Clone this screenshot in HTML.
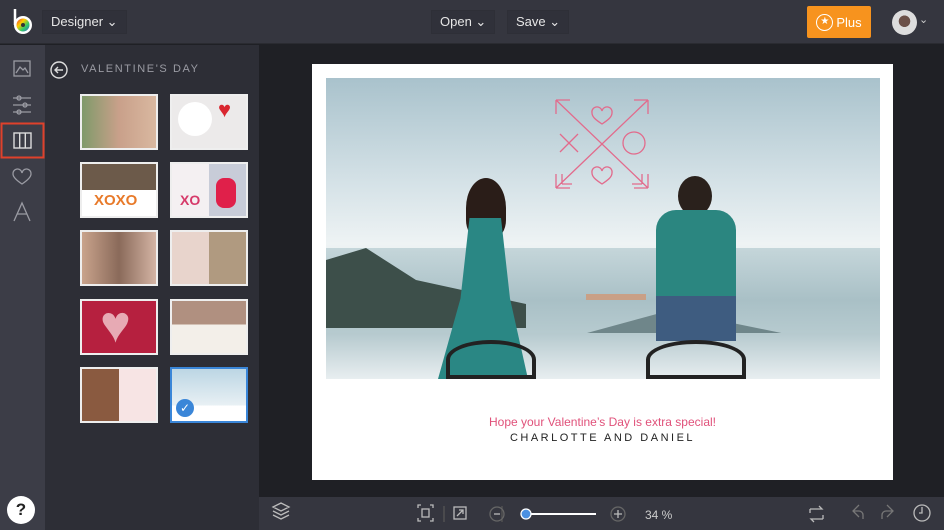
<!DOCTYPE html>
<html><head><meta charset="utf-8"><style>
*{margin:0;padding:0;box-sizing:border-box}
body{width:944px;height:530px;overflow:hidden;background:#1f2025;font-family:"Liberation Sans",sans-serif;position:relative}
.abs{position:absolute}
.top{left:0;top:0;width:944px;height:44px;background:#35363f;border-bottom:1px solid #2a2b31}
.btn{position:absolute;top:10px;height:24px;background:#30313a;border:1px solid #2e2f37;color:#e6e6e6;font-size:13px;line-height:22px;padding:0 8px}
.side{left:0;top:45px;width:45px;height:485px;background:#3c3d47}
.panel{left:45px;top:45px;width:214px;height:485px;background:#2d2e36}
.th{position:absolute;width:78px;height:56px;border:2px solid #eee;overflow:hidden}
.bot{left:259px;top:497px;width:685px;height:33px;background:#35363f}
.ic{stroke:#9a9ba3;fill:none;stroke-width:1.3}
</style></head><body>
<div class="abs top"></div>
<svg class="abs" style="left:10px;top:8px" width="26" height="28" viewBox="0 0 26 28"><path d="M5 1v16" stroke="#fff" stroke-width="2.5"/><circle cx="13" cy="17" r="9" fill="#fff"/><circle cx="13" cy="17" r="6.5" fill="url(#g)"/><defs><linearGradient id="g" x1="0" y1="0" x2="1" y2="1"><stop offset="0" stop-color="#e33"/><stop offset=".35" stop-color="#fc0"/><stop offset=".65" stop-color="#3c6"/><stop offset="1" stop-color="#36c"/></linearGradient></defs><circle cx="13" cy="17" r="2" fill="#333"/></svg>
<div class="btn" style="left:42px">Designer ⌄</div>
<div class="btn" style="left:431px">Open ⌄</div>
<div class="btn" style="left:507px">Save ⌄</div>
<div class="abs" style="left:807px;top:6px;width:64px;height:32px;background:#f7931e;border-radius:2px;color:#fff;font-size:13px;display:flex;align-items:center;justify-content:center;gap:3px;white-space:nowrap"><span style="display:inline-block;width:17px;height:17px;border:1.5px solid #fff;border-radius:50%;font-size:10px;line-height:14px;text-align:center">★</span>Plus</div>
<div class="abs" style="left:892px;top:10px;width:25px;height:25px;border-radius:50%;background:radial-gradient(circle at 50% 45%,#6b5048 30%,#ddd 32%)"></div>
<div class="abs" style="left:919px;top:13px;color:#ccc;font-size:11px">⌄</div>

<div class="abs side"></div>
<svg class="abs" style="left:0;top:45px" width="45" height="200">
<rect x="14" y="16" width="16" height="15" class="ic"/><path d="M16 28l4-6 3 3 2-2 3 5" class="ic"/>
<path d="M13 53h18M13 60h18M13 67h18" class="ic"/><circle cx="19" cy="53" r="2" class="ic"/><circle cx="25" cy="60" r="2" class="ic"/><circle cx="19" cy="67" r="2" class="ic"/>
<rect x="1.5" y="78.5" width="42" height="34" stroke="#e0412b" stroke-width="2" fill="none"/>
<rect x="14" y="88" width="17" height="15" stroke="#ddd" stroke-width="1.4" fill="none"/><path d="M19.7 88v15M25.3 88v15" stroke="#ddd" stroke-width="1.4"/>
<path d="M22 139c-6-4-9-7-9-10a4 4 0 0 1 9-1a4 4 0 0 1 9 1c0 3-3 6-9 10z" class="ic"/>
<path d="M14 176l8-18 8 18M17 169h10" class="ic"/>
</svg>
<div class="abs" style="left:7px;top:496px;width:28px;height:28px;border-radius:50%;background:#fff;color:#222;font-weight:bold;font-size:17px;text-align:center;line-height:28px">?</div>

<div class="abs panel"></div>
<svg class="abs" style="left:49px;top:60px" width="20" height="20"><circle cx="10" cy="10" r="8" stroke="#ddd" stroke-width="1.4" fill="none"/><path d="M14 10H6M9 7l-3 3 3 3" stroke="#ddd" stroke-width="1.4" fill="none"/></svg>
<div class="abs" style="left:81px;top:63px;color:#9a9ba3;font-size:11px;letter-spacing:1.6px">VALENTINE'S DAY</div>

<div class="th" style="left:80px;top:94px;background:linear-gradient(90deg,#7f9a6a,#c9a08a 50%,#d9b8a0)"></div>
<div class="th" style="left:170px;top:94px;background:#eceaea"><div class="abs" style="left:6px;top:6px;width:34px;height:34px;border-radius:50%;background:#fff"></div><div class="abs" style="left:46px;top:4px;width:24px;height:20px;color:#d9262f;font-size:22px;line-height:20px">♥</div></div>
<div class="th" style="left:80px;top:162px;background:linear-gradient(#6c5a4a 0 50%,#fff 50%)"><div class="abs" style="left:12px;top:28px;color:#e87a2a;font-weight:bold;font-size:15px">XOXO</div></div>
<div class="th" style="left:170px;top:162px;background:linear-gradient(90deg,#f4f0f2 50%,#c8ccd8 50%)"><div class="abs" style="left:8px;top:28px;color:#d63a6a;font-weight:bold;font-size:14px">XO</div><div class="abs" style="left:44px;top:14px;width:20px;height:30px;background:#e0204a;border-radius:8px"></div></div>
<div class="th" style="left:80px;top:230px;background:linear-gradient(90deg,#c9a38c,#8a6a5a 50%,#d4b4a4)"></div>
<div class="th" style="left:170px;top:230px;background:linear-gradient(90deg,#e8d4cc 50%,#b09a80 50%)"></div>
<div class="th" style="left:80px;top:299px;background:#b6203f"><div class="abs" style="left:18px;top:-4px;color:#e7aab4;font-size:52px;line-height:56px">♥</div></div>
<div class="th" style="left:170px;top:299px;background:linear-gradient(#b09080 0 45%,#f3efe9 45%)"></div>
<div class="th" style="left:80px;top:367px;background:linear-gradient(90deg,#8a5a40 50%,#f7e4e4 50%)"></div>
<div class="th" style="left:170px;top:367px;border-color:#3a86d8;background:linear-gradient(#bcd6e4,#e8f0f4 70%,#fff 70%)"><div class="abs" style="left:4px;top:30px;width:18px;height:18px;border-radius:50%;background:#3a86d8;color:#fff;font-size:12px;text-align:center;line-height:18px">✓</div></div>

<!-- card -->
<div class="abs" style="left:312px;top:64px;width:581px;height:416px;background:#fff"></div>
<div class="abs" style="left:326px;top:78px;width:554px;height:301px;overflow:hidden;background:linear-gradient(#a9c2cc 0%,#d5e2e7 35%,#eef3f4 55%,#dfe8ea 70%)">
 <div class="abs" style="left:0;top:170px;width:554px;height:131px;background:linear-gradient(#c5d6da,#a9c0c6 40%,#c9d9dc)"></div>
 <div class="abs" style="left:0;top:170px;width:200px;height:80px;background:#3d4f4a;clip-path:polygon(0 15%,20% 0,45% 40%,100% 70%,100% 100%,0 100%)"></div>
 <div class="abs" style="left:250px;top:228px;width:220px;height:30px;background:#6f868a;clip-path:polygon(0 100%,40% 20%,60% 40%,100% 100%)"></div>
 <div class="abs" style="left:0;top:255px;width:554px;height:46px;background:linear-gradient(#b5c9ce,#e8eef0)"></div>
 <div class="abs" style="left:140px;top:100px;width:40px;height:60px;background:#2a1d18;border-radius:50% 50% 30% 30%"></div>
 <div class="abs" style="left:112px;top:140px;width:90px;height:161px;background:#2a8784;clip-path:polygon(35% 0,70% 0,80% 50%,100% 100%,0 100%,25% 50%)"></div>
 <div class="abs" style="left:352px;top:98px;width:34px;height:40px;background:#2a211c;border-radius:50%"></div>
 <div class="abs" style="left:330px;top:132px;width:80px;height:90px;background:#2b8680;border-radius:20px 20px 4px 4px"></div>
 <div class="abs" style="left:330px;top:218px;width:80px;height:45px;background:#3e5c80"></div>
 <div class="abs" style="left:260px;top:216px;width:60px;height:6px;background:#c9a086"></div>
 <div class="abs" style="left:120px;top:262px;width:90px;height:39px;border:4px solid #222;border-radius:50% 50% 0 0"></div>
 <div class="abs" style="left:320px;top:262px;width:100px;height:39px;border:4px solid #222;border-radius:50% 50% 0 0"></div>
 <svg class="abs" style="left:226px;top:18px" width="100" height="96" viewBox="0 0 100 96" fill="none" stroke="#e26b8c" stroke-width="1.3">
  <path d="M4 4l92 88M96 4L4 92M4 4h14M4 4v14M96 4h-14M96 4v14M4 92v-14M4 92h14M96 92v-14M96 92h-14M10 88h10M10 88v-10M90 88v-10M90 88h-10"/>
  <path d="M50 28c-6-4-10-7-10-11a5 5 0 0 1 10-2a5 5 0 0 1 10 2c0 4-4 7-10 11z"/>
  <path d="M50 88c-6-4-10-7-10-11a5 5 0 0 1 10-2a5 5 0 0 1 10 2c0 4-4 7-10 11z"/>
  <path d="M8 38l18 18M26 38L8 56"/><circle cx="82" cy="47" r="11"/>
 </svg>
</div>
<div class="abs" style="left:312px;top:415px;width:581px;text-align:center;color:#e0517a;font-size:12px">Hope your Valentine’s Day is extra special!</div>
<div class="abs" style="left:312px;top:432px;width:581px;text-align:center;color:#222;font-size:11px;letter-spacing:2.5px">CHARLOTTE AND DANIEL</div>

<div class="abs bot"></div>
<svg class="abs" style="left:259px;top:497px" width="685" height="33" fill="none" stroke="#bbb" stroke-width="1.3">
 <path d="M14 10l8-4 8 4-8 4zM14 14l8 4 8-4M14 18l8 4 8-4"/>
 <path d="M159 11v-3h3M171 8h3v3M174 21v3h-3M162 24h-3v-3"/><rect x="163" y="12" width="7" height="8"/>
 <path d="M185 9v16" stroke="#555"/>
 <rect x="195" y="10" width="12" height="12"/><path d="M198 19l6-6M200 13h4v4"/>
 <path d="M243 9v16" stroke="#555"/>
 <circle cx="238" cy="17" r="7" stroke="#666"/><path d="M235 17h6"/>
 <path d="M267 17h70" stroke="#fff" stroke-width="2"/><circle cx="267" cy="17" r="5" fill="#4a90e2" stroke="#fff"/>
 <circle cx="359" cy="17" r="7" stroke="#666"/><path d="M355 17h8M359 13v8"/>
 <path d="M551 12h12l-3-3M564 22h-12l3 3M551 12v4M564 22v-4"/>
 <path d="M600 20l-6-6 6-6M594 14h6a4 4 0 0 1 4 4v4" stroke="#777"/>
 <path d="M623 22v-4a4 4 0 0 1 4-4h6M628 8l6 6-6 6" stroke="#777"/>
 <circle cx="663" cy="16" r="8"/><path d="M663 10v6h-3"/>
</svg>
<div class="abs" style="left:645px;top:508px;color:#ccc;font-size:12px">34 %</div>
</body></html>
